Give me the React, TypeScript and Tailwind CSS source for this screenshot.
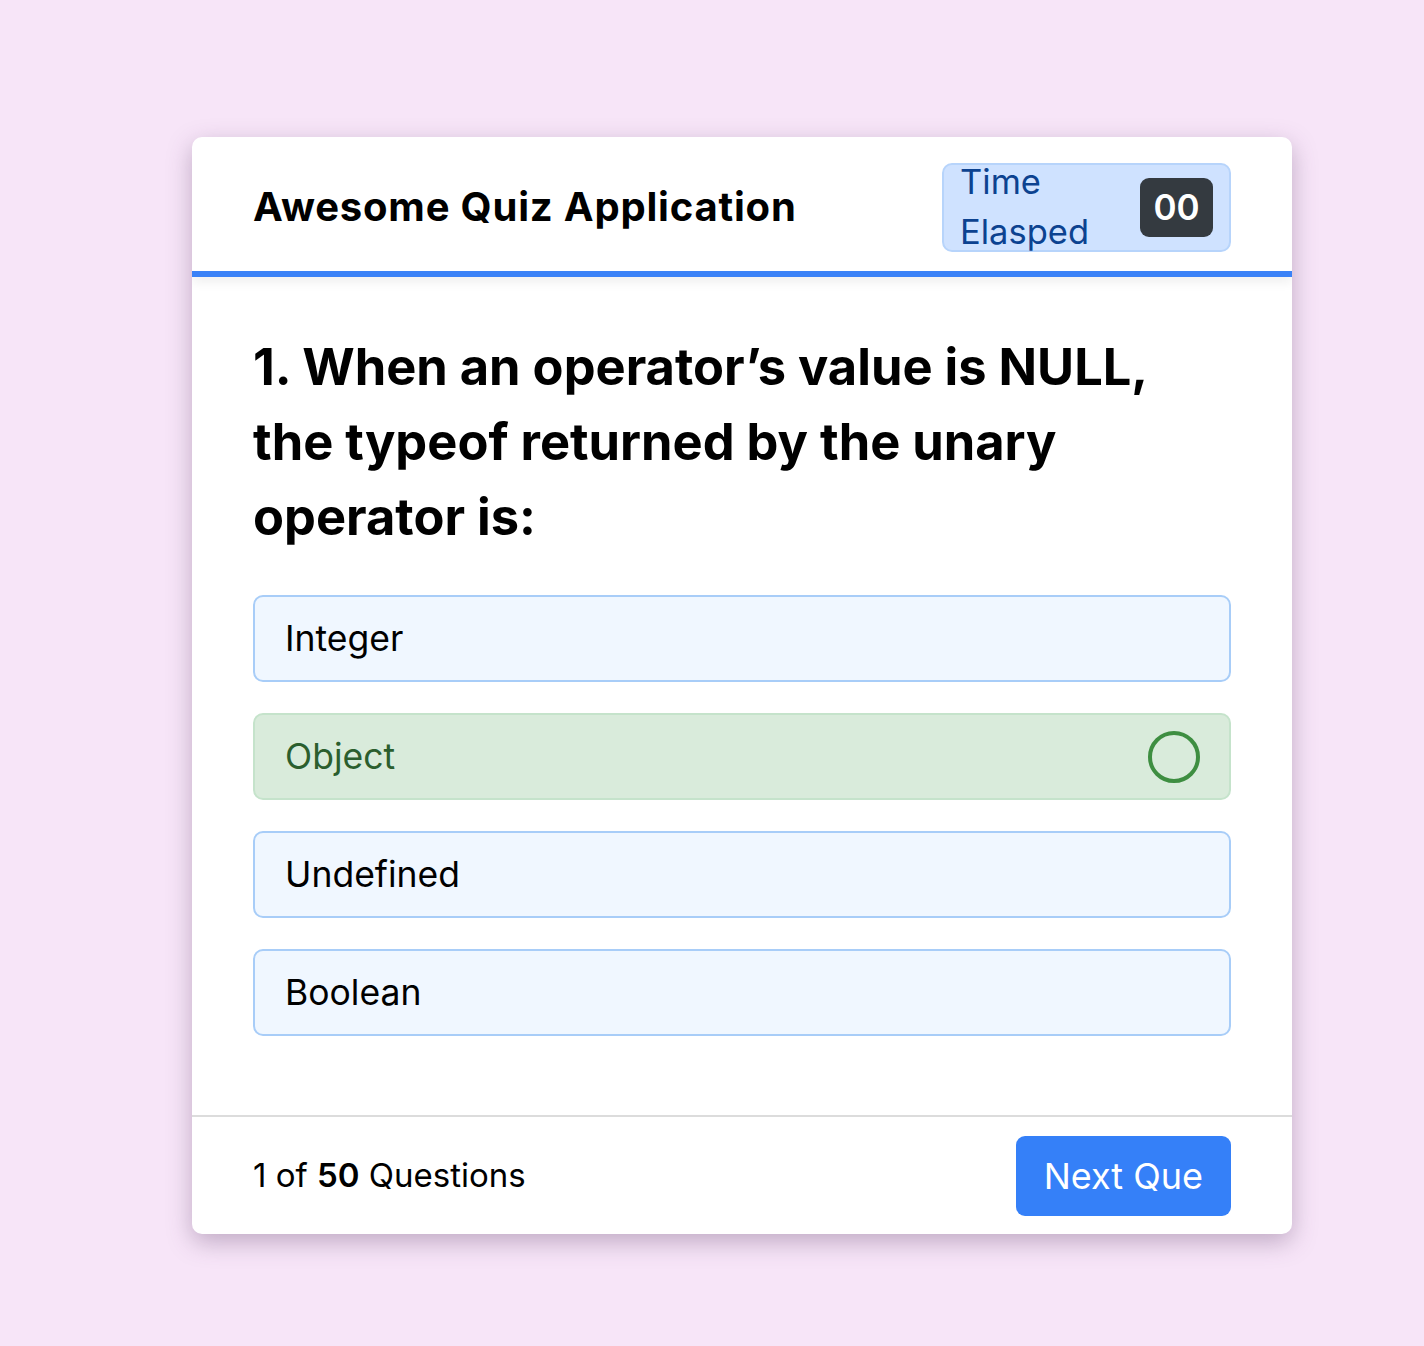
import React from "react";

const font = { fontFamily: "Inter, 'Noto Sans', sans-serif" };

function Option({ label, correct }: { label: string; correct?: boolean }) {
  if (correct) {
    return (
      <div className="flex h-[87px] items-center justify-between rounded-[10px] border-2 border-[#c5e3cb] bg-[#d9ebdb] pl-[30px] pr-[28px]">
        <span className="text-[35.5px] text-[#2b5e2e]">{label}</span>
        <svg width="54" height="54" viewBox="0 0 54 54">
          <circle cx="27" cy="27" r="24" fill="none" stroke="#3e8e41" strokeWidth="4" />
        </svg>
      </div>
    );
  }
  return (
    <div className="flex h-[87px] items-center rounded-[10px] border-2 border-[#a8cdf8] bg-[#f0f7ff] pl-[30px]">
      <span className="text-[35.5px] text-black">{label}</span>
    </div>
  );
}

export default function App() {
  return (
    <div className="min-h-screen bg-[#f7e5f8] pl-[192px] pt-[137px] pb-[112px]" style={font}>
      <div className="w-[1100px] overflow-hidden rounded-[10px] bg-white shadow-[0_8px_24px_rgba(90,60,100,0.35)]">
        <div className="flex h-[140px] items-center justify-between border-b-[6px] border-[#3a82f7] px-[61px] pt-[6px] shadow-[0_6px_10px_rgba(0,0,0,0.06)]">
          <h1 className="text-[40px] font-bold tracking-[0.8px] text-black">Awesome Quiz Application</h1>
          <div className="flex h-[89px] w-[289px] items-center justify-between rounded-[10px] border-2 border-[#b7d4fb] bg-[#cfe2ff] pl-[16px] pr-[16px]">
            <div className="text-[34.5px] leading-[50px] text-[#0c4290]">
              <div>Time</div>
              <div>Elasped</div>
            </div>
            <div className="flex h-[59px] w-[73px] items-center justify-center rounded-[9px] bg-[#343a40] text-[35px] font-semibold text-white">
              00
            </div>
          </div>
        </div>
        <div className="px-[61px] pt-[52px] pb-[79px]">
          <h2 className="text-[50.6px] font-bold leading-[75px] text-black">
            1. When an operator’s value is NULL,
            <br />
            the typeof returned by the unary
            <br />
            operator is:
          </h2>
          <div className="mt-[41px] flex flex-col gap-[31px]">
            <Option label="Integer" />
            <Option label="Object" correct />
            <Option label="Undefined" />
            <Option label="Boolean" />
          </div>
        </div>
        <div className="flex h-[119px] items-center justify-between border-t-2 border-[#dcdcdc] px-[61px]">
          <p className="text-[33px] text-black">
            1 of <span className="font-semibold">50</span> Questions
          </p>
          <button className="flex h-[80px] items-center rounded-[9px] bg-[#3580f8] px-[28px] text-[36px] text-white">
            Next Que
          </button>
        </div>
      </div>
    </div>
  );
}
